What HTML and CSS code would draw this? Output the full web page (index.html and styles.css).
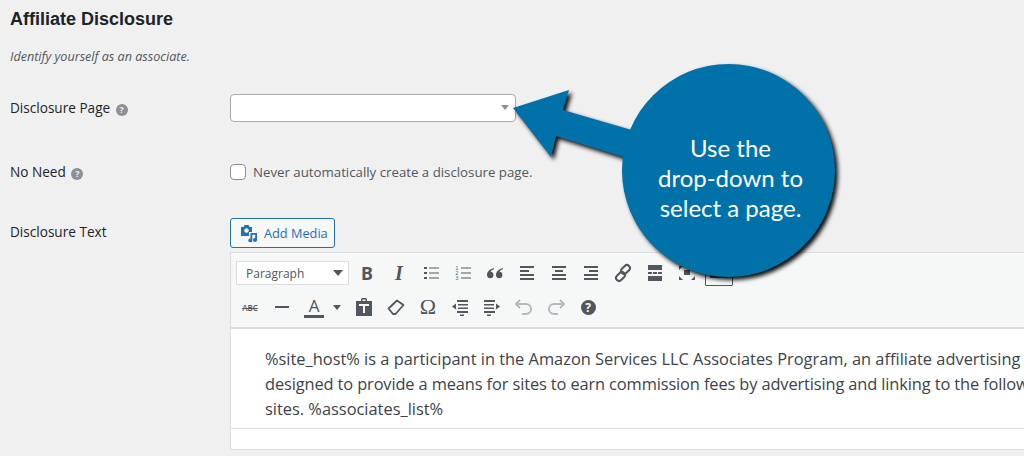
FILE: index.html
```html
<!DOCTYPE html>
<html lang="en">
<head>
    <meta charset="UTF-8">
    <title>Affiliate Disclosure</title>
    <link rel="stylesheet" href="styles.css">
</head>
<body>
    <div class="page">
        <h2 class="section-title">Affiliate Disclosure</h2>
        <p class="section-desc">Identify yourself as an associate.</p>

        <!-- Disclosure page select -->
        <div class="form-row row-page">
            <div class="row-label">Disclosure Page <span class="help-dot">?</span></div>
            <div class="select-box"><span class="select-arrow"></span></div>
        </div>

        <!-- No need checkbox -->
        <div class="form-row row-noneed">
            <div class="row-label">No Need <span class="help-dot">?</span></div>
            <div class="check-line">
                <span class="check-box"></span>
                <span>Never automatically create a disclosure page.</span>
            </div>
        </div>

        <!-- Disclosure text editor -->
        <div class="form-row row-text">
            <div class="row-label">Disclosure Text</div>
            <div class="editor-col">
                <button class="media-btn">
                    <svg class="media-icon" viewBox="0 0 18 18">
                        <path fill="#2271b1" d="M1 3h2.500l1-2h4l1 2H12v5H9v4H1z"/>
                        <circle cx="6.500" cy="6.500" r="2.200" fill="#f6f7f7"/>
                        <path fill="#2271b1" d="M10.500 9H17v7a2 2 0 1 1-1.800-2V10.800h-2.900V16.500a2 2 0 1 1-1.800-2z"/>
                    </svg>
                    Add Media
                </button>
                <div class="editor">
                    <div class="toolbar">
                        <div class="tool-row">
                            <div class="format-select">Paragraph<span class="format-arrow"></span></div>
                            <span class="tool tool-b">B</span>
                            <span class="tool tool-i">I</span>
                            <span class="tool"><svg viewBox="0 0 20 20"><path class="ico" d="M3 4h3v2H3zM3 9h3v2H3zM3 14h3v2H3z"/><path class="ico" d="M8 4.500h10v1H8zM8 9.500h10v1H8zM8 14.500h10v1H8z"/></svg></span>
                            <span class="tool"><svg viewBox="0 0 20 20"><text class="ol-num" x="2.500" y="6.500">1</text><text class="ol-num" x="2.500" y="11.500">2</text><text class="ol-num" x="2.500" y="16.500">3</text><path class="ico" d="M8 4.500h10v1H8zM8 9.500h10v1H8zM8 14.500h10v1H8z"/></svg></span>
                            <span class="tool"><svg viewBox="0 0 20 20"><path class="ico" d="M9 5C5 6 2 8.500 2 12a3.200 3.200 0 1 0 3.500-3.200C6 7.500 7.500 6.500 9 6.200zM18 5c-4 1-7 3.500-7 7a3.200 3.200 0 1 0 3.500-3.200c.5-1.300 2-2.300 3.500-2.600z"/></svg></span>
                            <span class="tool"><svg viewBox="0 0 20 20"><path class="ico" d="M3 3h14v2H3zM3 7h9v2H3zM3 11h14v2H3zM3 15h14v2H3z"/></svg></span>
                            <span class="tool"><svg viewBox="0 0 20 20"><path class="ico" d="M3 3h14v2H3zM6 7h8v2H6zM3 11h14v2H3zM3 15h14v2H3z"/></svg></span>
                            <span class="tool"><svg viewBox="0 0 20 20"><path class="ico" d="M3 3h14v2H3zM8 7h9v2H8zM3 11h14v2H3zM3 15h14v2H3z"/></svg></span>
                            <span class="tool"><svg viewBox="0 0 20 20"><g fill="none" stroke="#50575e" stroke-width="2"><rect x="9.500" y="1.500" width="6" height="10" rx="3" transform="rotate(45 12.500 6.500)"/><rect x="4.500" y="8.500" width="6" height="10" rx="3" transform="rotate(45 7.500 13.500)"/></g></svg></span>
                            <span class="tool"><svg viewBox="0 0 20 20"><path class="ico" d="M3 2h14v5H3zM3 9h4v2H3zM8 9h4v2H8zM13 9h4v2h-4zM3 13h14v5H3z"/></svg></span>
                            <span class="tool"><svg viewBox="0 0 20 20"><path class="ico" d="M7 7h6v5H7zM2 3h4L2 7zM18 3v4l-4-4zM2 17v-4l4 4zM18 17h-4l4-4z"/></svg></span>
                            <span class="tool tool-kitchen"><svg viewBox="0 0 20 20"><path class="ico" d="M1 13h18v3H1z"/></svg></span>
                        </div>
                        <div class="tool-row">
                            <span class="tool tool-abc">ABC</span>
                            <span class="tool"><svg viewBox="0 0 20 20"><path class="ico" d="M3 9h14v2H3z"/></svg></span>
                            <span class="tool tool-color">A</span>
                            <span class="color-arrow"></span>
                            <span class="tool"><svg viewBox="0 0 20 20"><path class="ico" fill-rule="evenodd" d="M2 4h5V2.500A1.500 1.500 0 0 1 8.500 1h3A1.500 1.500 0 0 1 13 2.500V4h5v15H2zM8.500 2.500v1.500h3V2.500zM5 7v2h4v7h2V9h4V7z"/></svg></span>
                            <span class="tool"><svg viewBox="0 0 20 20"><path fill="none" stroke="#50575e" stroke-width="1.800" stroke-linejoin="round" d="M2.500 11.500 11 3.500l6.500 4.500L9.500 17H7z"/></svg></span>
                            <span class="tool tool-omega">Ω</span>
                            <span class="tool"><svg viewBox="0 0 20 20"><path class="ico" d="M7 3h11v2H7zM2 9.500 6 6.500v6zM8 7h10v1.500H8zM8 10.500h10V12H8zM7 14h11v2H7zM10 17.500h4v1.500h-4z"/></svg></span>
                            <span class="tool"><svg viewBox="0 0 20 20"><path class="ico" d="M2 3h11v2H2zM18 9.500 14 6.500v6zM2 7h10v1.500H2zM2 10.500h10V12H2zM2 14h11v2H2zM5 17.500h4v1.500H5z"/></svg></span>
                            <span class="tool"><svg viewBox="0 0 20 20"><path class="ico-off" d="M6 3 2 7l4 4M2.500 7H12a5 5 0 0 1 0 10H8"/></svg></span>
                            <span class="tool"><svg viewBox="0 0 20 20"><path class="ico-off" d="m14 3 4 4-4 4M17.500 7H8a5 5 0 0 0 0 10h4"/></svg></span>
                            <span class="tool"><span class="help-dark">?</span></span>
                        </div>
                    </div>
                    <div class="editor-body">
                        %site_host% is a participant in the Amazon Services LLC Associates Program, an affiliate advertising<br>
                        <span class="tight-line">designed to provide a means for sites to earn commission fees by advertising and linking to the follow</span><br>
                        sites. %associates_list%
                    </div>
                    <div class="editor-status"></div>
                </div>
            </div>
        </div>
    </div>

    <!-- Callout drawn over the page -->
    <div class="callout">
        <svg class="callout-shape" viewBox="0 0 340 230" width="340" height="230">
            <path fill="#0071a9" d="M3 48 59 30 53 50 125 71 113 97 46 76 41 97z"/>
            <circle cx="218.500" cy="110.500" r="106.500" fill="#0071a9"/>
        </svg>
        <div class="callout-text">Use the<br>drop-down to<br>select a page.</div>
    </div>
</body>
</html>
```

FILE: styles.css
```css
* {
    margin: 0;
    padding: 0;
    box-sizing: border-box;
}

body {
    font-family: "Open Sans", "Noto Sans", sans-serif;
    font-size: 13px;
    color: #3c434a;
    background: #f0f0f1;
    overflow: hidden;
    height: 456px;
}

.page {
    padding: 8px 0 0 10px;
}

.section-title {
    font-family: "Liberation Sans", Arial, sans-serif;
    font-size: 18px;
    line-height: 22px;
    font-weight: 700;
    color: #1d2327;
}

.section-desc {
    margin-top: 18px;
    font-size: 12.6px;
    line-height: 18px;
    font-style: italic;
    color: #50575e;
}

.form-row {
    display: grid;
    grid-template-columns: 220px 1fr;
}

.row-page {
    margin-top: 28px;
}

.row-noneed {
    margin-top: 41px;
}

.row-text {
    margin-top: 37px;
}

.row-label {
    font-size: 13.6px;
    font-weight: 500;
    color: #1d2327;
    line-height: 28px;
}

.row-noneed .row-label {
    line-height: 18px;
}

.row-text .row-label {
    padding-top: 5px;
    line-height: 18px;
}

.help-dot {
    display: inline-block;
    width: 12px;
    height: 12px;
    margin-left: 2px;
    border-radius: 50%;
    background: #8c8f94;
    color: #f0f0f1;
    font-size: 9px;
    font-weight: 700;
    line-height: 12px;
    text-align: center;
    vertical-align: 0;
}

.select-box {
    position: relative;
    width: 286px;
    height: 28px;
    background: #fff;
    border: 1px solid #a7aaad;
    border-radius: 4px;
}

.select-arrow {
    position: absolute;
    right: 6px;
    top: 10px;
    border-left: 4px solid transparent;
    border-right: 4px solid transparent;
    border-top: 5px solid #8c8f94;
}

.check-line {
    display: flex;
    align-items: center;
    gap: 7px;
    font-size: 13.25px;
    line-height: 18px;
    color: #50575e;
}

.check-box {
    width: 16px;
    height: 16px;
    background: #fff;
    border: 1px solid #8c8f94;
    border-radius: 4px;
}

.media-btn {
    display: flex;
    align-items: center;
    gap: 6px;
    width: 105px;
    height: 30px;
    padding-left: 9px;
    font: inherit;
    font-size: 12.75px;
    color: #2271b1;
    background: #f6f7f7;
    border: 1px solid #2271b1;
    border-radius: 3px;
}

.media-icon {
    width: 18px;
    height: 18px;
}

.editor {
    margin-top: 4px;
    border: 1px solid #dcdcde;
    border-right: 0;
    background: #fff;
}

.toolbar {
    height: 76px;
    padding: 3px 3px 0;
    background: #f6f7f7;
    border-bottom: 2px solid #dcdcde;
}

.tool-row {
    display: flex;
    align-items: center;
    height: 34px;
}

.format-select {
    display: flex;
    justify-content: space-between;
    align-items: center;
    width: 113px;
    height: 24px;
    margin: 0 2px 0 2px;
    padding: 0 5px 0 9px;
    font-size: 12px;
    color: #50575e;
    background: #fff;
    border: 1px solid #dcdcde;
}

.format-arrow,
.color-arrow {
    border-left: 4px solid transparent;
    border-right: 4px solid transparent;
    border-top: 5px solid #50575e;
}

.format-arrow {
    border-left-width: 5px;
    border-right-width: 5px;
    border-top-width: 6px;
}

.color-arrow {
    margin: 0 7px 0 3px;
}

.tool {
    display: flex;
    justify-content: center;
    align-items: center;
    flex: none;
    width: 32px;
    height: 28px;
    color: #50575e;
}

.tool svg {
    width: 20px;
    height: 20px;
}

.ico {
    fill: #50575e;
}

.ico-off {
    fill: none;
    stroke: #b4b9be;
    stroke-width: 2;
}

.ol-num {
    font-family: "Liberation Sans", sans-serif;
    font-size: 5px;
    fill: #50575e;
}

.tool-b {
    font-family: "Noto Sans", sans-serif;
    font-size: 18px;
    font-weight: 700;
}

.tool-i {
    font-family: "Liberation Serif", serif;
    font-size: 20px;
    font-weight: 700;
    font-style: italic;
}

.tool-abc {
    font-size: 8px;
    font-weight: 600;
    text-decoration: line-through;
}

.tool-color {
    font-size: 17px;
    width: 20px;
    margin: 0 6px;
    height: 22px;
    line-height: 20px;
    border-bottom: 3px solid #50575e;
}

.tool-omega {
    font-family: "Liberation Serif", serif;
    font-size: 22px;
}

.tool-kitchen {
    width: 28px;
    height: 28px;
    margin: 0 0 2px 2px;
    border: 1px solid #50575e;
    border-radius: 1px;
}

.help-dark {
    display: block;
    width: 15px;
    height: 15px;
    border-radius: 50%;
    background: #50575e;
    color: #f6f7f7;
    font-size: 12px;
    font-weight: 700;
    line-height: 15px;
    text-align: center;
}

.editor-body {
    height: 99px;
    padding: 17px 0 0 34px;
    font-size: 16.4px;
    line-height: 25px;
    white-space: nowrap;
    overflow: hidden;
    color: #3c434a;
}

.tight-line {
    letter-spacing: -0.12px;
}

.editor-status {
    height: 21px;
    border-top: 1px solid #dcdcde;
}

.callout {
    position: absolute;
    left: 510px;
    top: 60px;
    width: 340px;
    height: 230px;
}

.callout-shape {
    display: block;
    filter: drop-shadow(3px 3px 2px rgba(0, 0, 0, 0.95));
}

.callout-text {
    position: absolute;
    left: 118px;
    top: 73px;
    width: 205px;
    font-family: Lato, sans-serif;
    font-size: 24px;
    line-height: 30px;
    text-align: center;
    color: #fff;
}
```
